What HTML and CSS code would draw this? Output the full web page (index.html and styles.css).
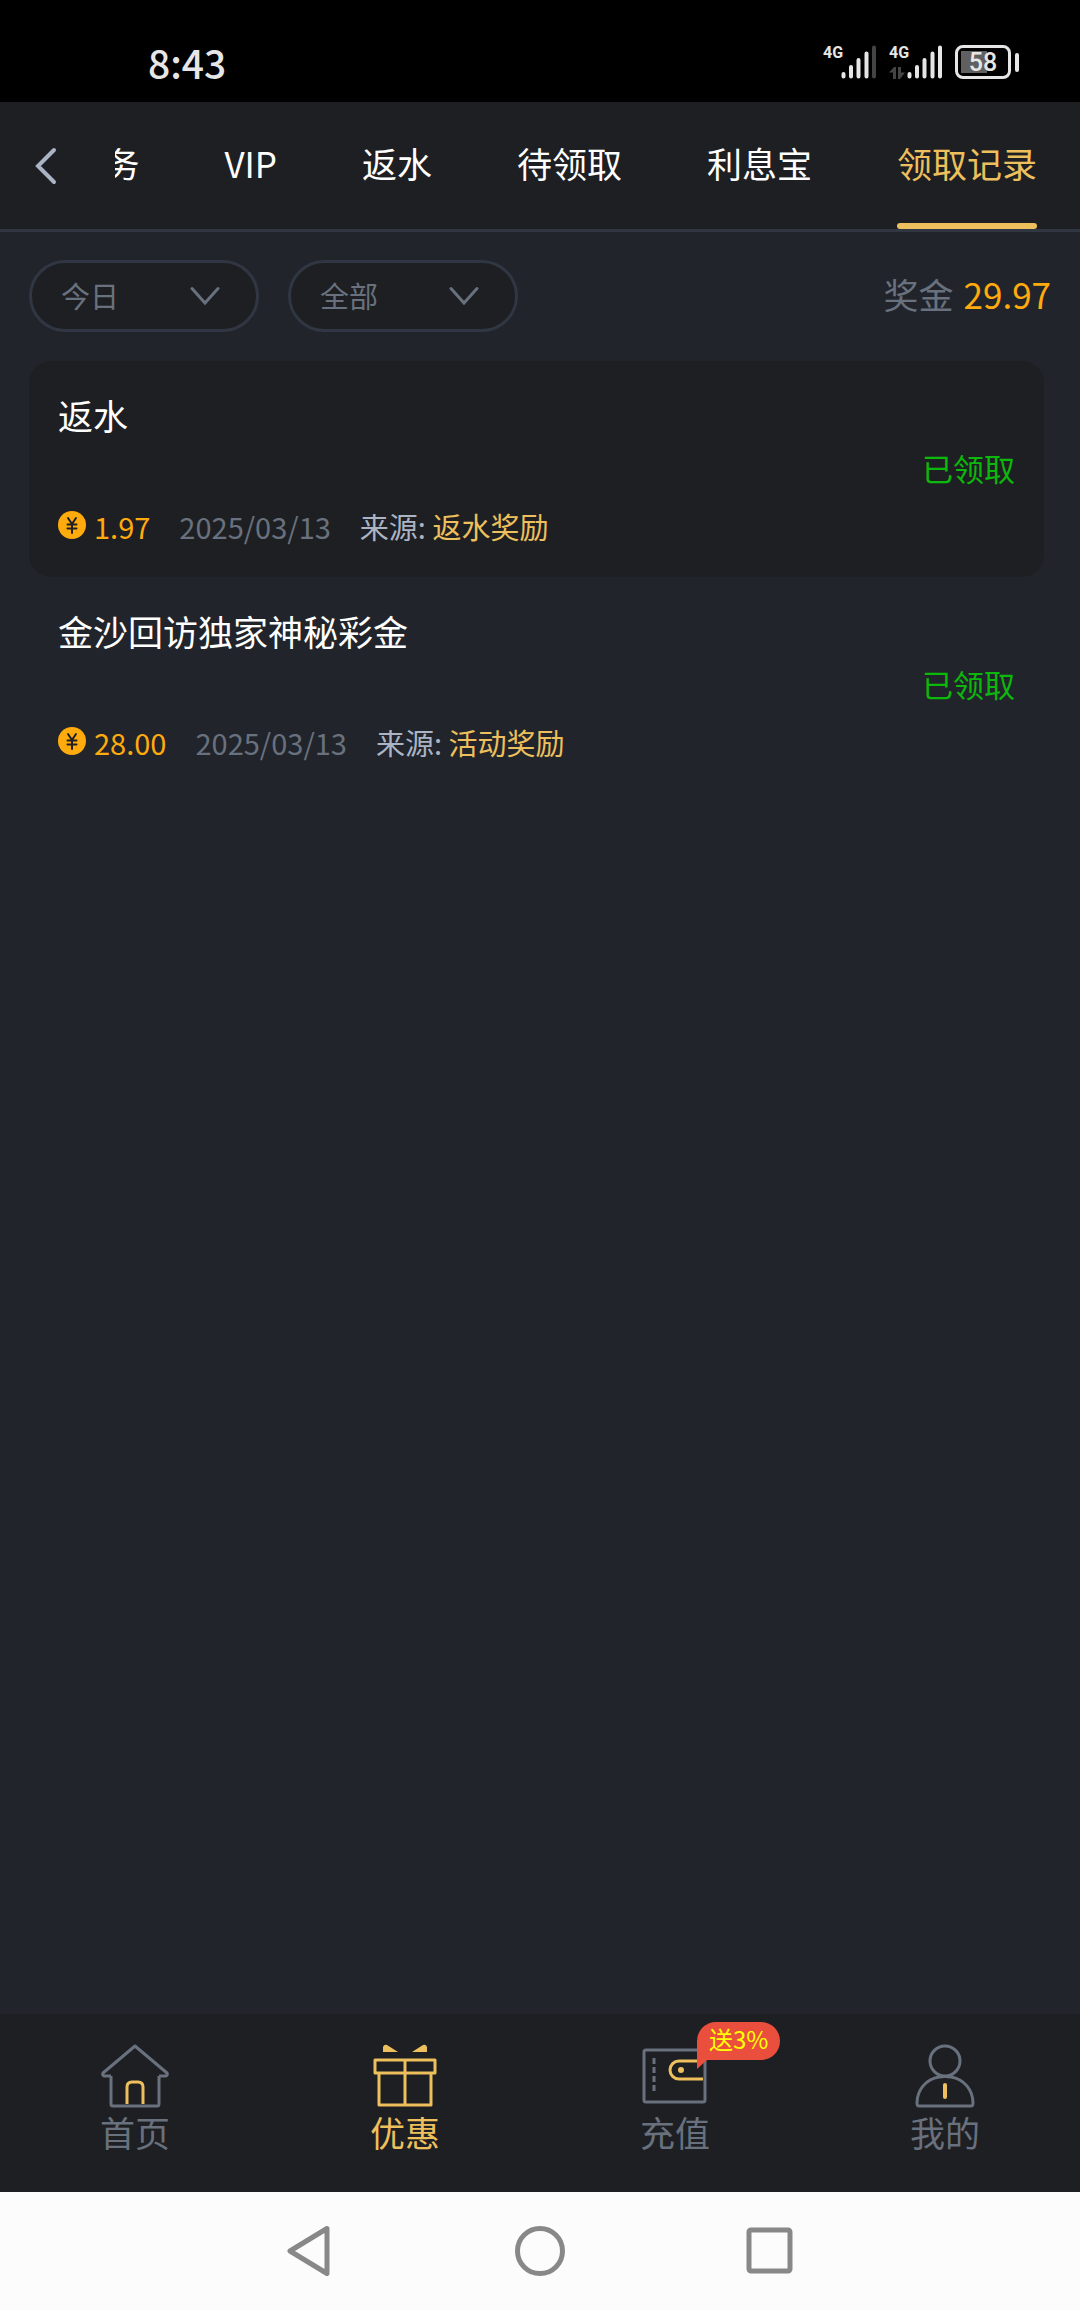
FILE: index.html
```html
<!DOCTYPE html>
<html lang="zh-CN">
<head>
<meta charset="utf-8">
<meta name="viewport" content="width=device-width, initial-scale=1">
<title>领取记录</title>
<link rel="stylesheet" href="styles.css">
</head>
<body>
<div class="status-bar">
  <time class="clock">8:43</time>
  <div class="status-icons">
    <div class="signal">
      <div class="network"><span>4G</span></div>
      <svg class="bars" width="36" height="34" viewBox="0 0 36 34" aria-hidden="true">
        <path class="bar" d="M2.5 29v2.5M10 22v9.500M17.500 15v16.500M25.500 8.500v23"/>
        <path class="bar bar-off" d="M33 2.500v29"/>
      </svg>
    </div>
    <div class="signal">
      <div class="network"><span>4G</span>
        <svg width="16" height="12" viewBox="0 0 16 12" aria-hidden="true"><path class="traffic" d="M0 5.500 5 0h2v12H4V5.500zM9 0h3v5.500h4L11 12H9z"/></svg>
      </div>
      <svg class="bars" width="36" height="34" viewBox="0 0 36 34" aria-hidden="true">
        <path class="bar" d="M2.500 29v2.500M10 22v9.500M17.500 15v16.500M25.500 8.500v23M33 2.500v29"/>
      </svg>
    </div>
    <div class="battery"><span class="battery-body">58</span></div>
  </div>
</div>

<header class="header">
  <button class="back" type="button" aria-label="返回">
    <svg width="24" height="38" viewBox="0 0 24 38" aria-hidden="true"><path d="M20 3 4 19l16 16"/></svg>
  </button>
  <nav class="tabs">
    <a class="tab" href="#tasks">任务</a>
    <a class="tab" href="#vip">VIP</a>
    <a class="tab" href="#rebate">返水</a>
    <a class="tab" href="#pending">待领取</a>
    <a class="tab" href="#interest">利息宝</a>
    <a class="tab tab-active" href="#records" aria-current="page">领取记录</a>
  </nav>
</header>

<main class="content">
  <div class="filters">
    <div class="picker">
      <select aria-label="日期"><option>今日</option></select>
      <svg width="30" height="20" viewBox="0 0 30 20" aria-hidden="true"><path d="M2 2.500 15 17 28 2.500"/></svg>
    </div>
    <div class="picker">
      <select aria-label="类型"><option>全部</option></select>
      <svg width="30" height="20" viewBox="0 0 30 20" aria-hidden="true"><path d="M2 2.500 15 17 28 2.500"/></svg>
    </div>
    <p class="total"><span>奖金</span><strong>29.97</strong></p>
  </div>

  <ul class="records">
    <li class="record">
      <div class="record-main">
        <h2>返水</h2>
        <div class="meta">
          <span class="amount"><svg width="28" height="28" viewBox="0 0 28 28" aria-hidden="true"><circle cx="14" cy="14" r="14"/><path d="M10 7 14 13l4-6M14 13v9M9.500 13.500h9M9.500 17.500h9"/></svg>1.97</span>
          <time>2025/03/13</time>
          <span class="source">来源: <em>返水奖励</em></span>
        </div>
      </div>
      <span class="state">已领取</span>
    </li>
    <li class="record">
      <div class="record-main">
        <h2>金沙回访独家神秘彩金</h2>
        <div class="meta">
          <span class="amount"><svg width="28" height="28" viewBox="0 0 28 28" aria-hidden="true"><circle cx="14" cy="14" r="14"/><path d="M10 7 14 13l4-6M14 13v9M9.500 13.500h9M9.500 17.500h9"/></svg>28.00</span>
          <time>2025/03/13</time>
          <span class="source">来源: <em>活动奖励</em></span>
        </div>
      </div>
      <span class="state">已领取</span>
    </li>
  </ul>
</main>

<nav class="dock">
  <a class="dock-item" href="#home">
    <svg width="70" height="64" viewBox="0 0 70 64" aria-hidden="true">
      <path class="line" d="M11 32v28q0 2 2 2h44q2 0 2-2V32M11 32H4q-2-1-1-3L35 2l32 27q1 2-1 3h-7"/>
      <path class="line gold" d="M27 60V43q0-5 5-5h6q5 0 5 5v17"/>
    </svg>
    <span>首页</span>
  </a>
  <a class="dock-item dock-active" href="#offers">
    <svg width="70" height="64" viewBox="0 0 70 64" aria-hidden="true">
      <path class="line gold" d="M5 16h60v13H5zM9 30v31h52V30M35 16v45"/>
      <path class="fill-gold" d="M13 8V3q1-3 4-2l11 7zM57 8V3q-1-3-4-2L42 8z"/>
    </svg>
    <span>优惠</span>
  </a>
  <a class="dock-item" href="#deposit">
    <span class="icon-wrap">
      <svg width="70" height="64" viewBox="0 0 70 64" aria-hidden="true">
        <rect class="line" x="4" y="6" width="61" height="52" rx="2"/>
        <path class="line" stroke-dasharray="6 3" d="M14 14v35"/>
        <path class="line gold" d="M63 17H39a9 9 0 0 0 0 18h24"/>
        <circle class="fill-gold" cx="41" cy="26" r="3"/>
      </svg>
      <span class="badge">送3%</span>
    </span>
    <span>充值</span>
  </a>
  <a class="dock-item" href="#mine">
    <svg width="70" height="64" viewBox="0 0 70 64" aria-hidden="true">
      <circle class="line" cx="35" cy="17" r="15"/>
      <path class="line" d="M29 33C16 35 7 46 7 59q0 3 2 3h52q2 0 2-3C63 46 54 35 41 33q-6-1-12 0z"/>
      <path class="line gold round" d="M35 41v12"/>
    </svg>
    <span>我的</span>
  </a>
</nav>

<div class="system-nav">
  <button type="button" aria-label="后退"><svg width="50" height="50" viewBox="0 0 50 50" aria-hidden="true"><path d="M42 2.500 5 25l37 22.500z"/></svg></button>
  <button type="button" aria-label="主屏幕"><svg width="50" height="50" viewBox="0 0 50 50" aria-hidden="true"><circle cx="25" cy="25" r="22.500"/></svg></button>
  <button type="button" aria-label="最近任务"><svg width="50" height="50" viewBox="0 0 50 50" aria-hidden="true"><rect x="4" y="4" width="41" height="41" rx="2"/></svg></button>
</div>
</body>
</html>
```
FILE: styles.css
```css
:root {
  --page: #21242b;
  --panel: #1e1f23;
  --line: #303742;
  --muted: #68717d;
  --soft: #aab4c4;
  --gold: #edc05d;
  --amber: #ffaa0d;
}

* {
  box-sizing: border-box;
}

body {
  margin: 0;
  min-height: 100vh;
  display: flex;
  flex-direction: column;
  background: var(--page);
  color: #fff;
  font-family: "Noto Sans CJK SC", "Noto Sans", sans-serif;
  font-size: 35px;
}

a {
  color: inherit;
  text-decoration: none;
}

button {
  padding: 0;
  border: 0;
  background: none;
  cursor: pointer;
}

svg {
  display: block;
  fill: none;
}

/* Phone status bar */
.status-bar {
  height: 102px;
  padding: 22px 61px 0 148px;
  display: flex;
  justify-content: space-between;
  align-items: center;
  background: #000;
  color: #e6e6e6;
}

.clock {
  font-size: 39px;
  font-weight: 500;
  line-height: 40px;
}

.status-icons {
  display: flex;
  gap: 12px;
}

.signal {
  display: flex;
}

.network {
  width: 18px;
  height: 34px;
  display: flex;
  flex-direction: column;
  justify-content: space-between;
  font: bold 16px/16px Roboto, sans-serif;
}

.bar {
  stroke: #e6e6e6;
  stroke-width: 4;
  stroke-linecap: round;
}

.bar-off {
  stroke: #444;
}

.traffic {
  fill: #444;
}

.battery {
  display: flex;
  align-items: center;
  gap: 4px;
}

.battery::after {
  content: "";
  width: 4px;
  height: 19px;
  border-radius: 2px;
  background: #e6e6e6;
}

.battery-body {
  width: 56px;
  height: 34px;
  border: 3px solid #e6e6e6;
  border-radius: 8px;
  background: linear-gradient(#606060, #606060) 3px center / 26px 22px no-repeat;
  font: 500 25px/30px Roboto, sans-serif;
  text-align: center;
}

/* Header with scrolled tabs */
.header {
  display: flex;
  height: 130px;
  border-bottom: 3px solid var(--line);
  background: var(--panel);
}

.back {
  flex: none;
  width: 115px;
  padding-left: 34px;
}

.back path {
  stroke: var(--soft);
  stroke-width: 4;
  stroke-linecap: round;
}

.tabs {
  flex: 1;
  min-width: 0;
  display: flex;
  justify-content: flex-end;
  gap: 85px;
  padding-right: 43px;
  overflow: hidden;
}

.tab {
  position: relative;
  flex: none;
  line-height: 122px;
  white-space: nowrap;
}

.tab-active {
  color: var(--gold);
}

.tab-active::after {
  content: "";
  position: absolute;
  left: 0;
  right: 0;
  bottom: 0;
  height: 6px;
  border-radius: 3px;
  background: var(--gold);
}

/* Filters */
.content {
  flex: 1;
  padding: 28px 29px;
}

.filters {
  display: flex;
  gap: 29px;
}

.picker {
  display: grid;
  align-items: center;
  width: 230px;
  color: var(--muted);
}

.picker select,
.picker svg {
  grid-area: 1 / 1;
}

.picker select {
  appearance: none;
  height: 72px;
  padding: 0 29px 2px;
  border: 3px solid var(--line);
  border-radius: 36px;
  background: var(--panel);
  color: inherit;
  font: inherit;
  font-size: 29px;
}

.picker svg {
  justify-self: end;
  margin-right: 39px;
  pointer-events: none;
}

.picker path {
  stroke: currentColor;
  stroke-width: 3;
  stroke-linecap: round;
}

.total {
  display: flex;
  gap: 10px;
  margin: 0 0 0 auto;
  color: var(--muted);
  line-height: 68px;
}

.total strong {
  color: var(--amber);
  font-weight: 400;
}

/* Records */
.records {
  margin: 29px 7px 0 0;
  padding: 0;
  list-style: none;
}

.record {
  display: flex;
  align-items: center;
  justify-content: space-between;
  padding: 26px 29px;
  border-radius: 22px;
}

.record:nth-child(odd) {
  background: var(--panel);
}

.record-main {
  display: grid;
  gap: 58px;
}

.record h2 {
  margin: 0;
  font-size: 35px;
  font-weight: 400;
  line-height: 56px;
}

.meta {
  display: flex;
  gap: 29px;
  color: var(--muted);
  font-size: 29px;
  line-height: 50px;
}

.amount {
  display: flex;
  gap: 8px;
  color: var(--amber);
}

.amount svg {
  margin-top: 10px;
}

.amount circle {
  fill: var(--amber);
}

.amount path {
  stroke: var(--panel);
  stroke-width: 2;
  stroke-linecap: round;
}

.source {
  color: var(--soft);
}

.source em {
  color: var(--gold);
  font-style: normal;
}

.state {
  padding-bottom: 4px;
  color: #0bb80b;
  font-size: 31px;
}

/* Bottom dock */
.dock {
  display: grid;
  grid-template-columns: repeat(4, 1fr);
  height: 178px;
  padding-top: 30px;
  background: var(--panel);
  color: var(--muted);
}

.dock-item {
  display: flex;
  flex-direction: column;
  align-items: center;
  line-height: 48px;
}

.dock-active {
  color: var(--gold);
}

.line {
  stroke: var(--muted);
  stroke-width: 3;
  stroke-linejoin: round;
}

.gold {
  stroke: var(--gold);
}

.round {
  stroke-width: 4;
  stroke-linecap: round;
}

.fill-gold {
  fill: var(--gold);
}

.icon-wrap {
  position: relative;
}

.badge {
  position: absolute;
  left: 57px;
  top: -22px;
  padding: 0 12px 4px;
  border-radius: 19px 19px 19px 0;
  background: #ea4f3d;
  color: #ff0;
  font-size: 24px;
  line-height: 34px;
  white-space: nowrap;
}

.badge::after {
  content: "";
  position: absolute;
  left: 0;
  top: 100%;
  border-top: 9px solid #ea4f3d;
  border-right: 10px solid transparent;
}

/* System navigation */
.system-nav {
  display: flex;
  justify-content: center;
  align-items: center;
  gap: 180px;
  height: 118px;
  background: #fcfcfc;
}

.system-nav svg {
  stroke: #888;
  stroke-width: 5;
  stroke-linejoin: round;
}
```
